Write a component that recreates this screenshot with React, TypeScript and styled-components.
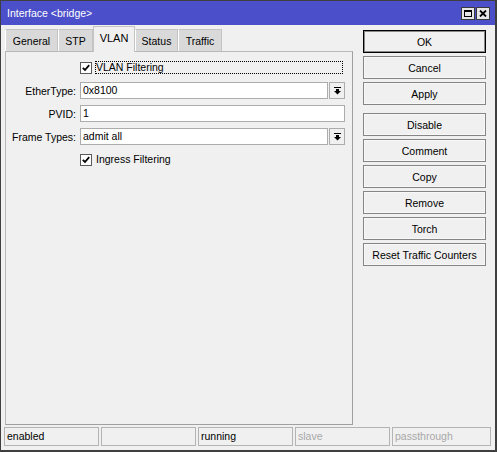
import styled, { createGlobalStyle } from "styled-components";

const GlobalStyle = createGlobalStyle`
  html, body {
    margin: 0;
    padding: 0;
    background: #f0f0f0;
  }
  * {
    box-sizing: border-box;
  }
`;

const Window = styled.div`
  width: 497px;
  height: 452px;
  display: flex;
  flex-direction: column;
  background: #f0f0f0;
  border: 1px solid #3f3f3f;
  border-bottom-width: 2px;
  border-right-width: 2px;
  font-family: "Liberation Sans", Arial, sans-serif;
  font-size: 10.5px;
  color: #000;
`;

const TitleBar = styled.div`
  height: 24px;
  display: flex;
  align-items: center;
  padding: 0 5px 0 6px;
  background: #4b4fc9;
  color: #fff;
  font-size: 10.5px;
`;

const TitleText = styled.span`
  flex: 1;
  padding-bottom: 1px;
`;

const TitleButton = styled.div`
  width: 14px;
  height: 13px;
  margin-left: 1px;
  display: flex;
  align-items: center;
  justify-content: center;
  background: #e6e6e6;
  border: 1px solid #3a3a3a;
`;

const Main = styled.div`
  display: grid;
  grid-template-columns: 348px 123px;
  column-gap: 10px;
  padding-left: 4px;
`;

const LeftColumn = styled.div`
  display: flex;
  flex-direction: column;
`;

const TabStrip = styled.div`
  height: 26px;
  display: flex;
  align-items: flex-end;
  padding-left: 0;
`;

const Tab = styled.div<{ $active?: boolean; $width: number }>`
  width: ${(p) => p.$width}px;
  height: ${(p) => (p.$active ? 26 : 22)}px;
  margin-bottom: ${(p) => (p.$active ? -1 : 0)}px;
  position: relative;
  z-index: ${(p) => (p.$active ? 1 : 0)};
  display: flex;
  align-items: center;
  justify-content: center;
  padding-bottom: ${(p) => (p.$active ? 3 : 0)}px;
  background: ${(p) => (p.$active ? "#f0f0f0" : "#d9d9d9")};
  border: 1px solid #c4c4c4;
  border-bottom: none;
  border-left-color: ${(p) => (p.$active ? "#c4c4c4" : "#ffffff")};
  font-size: ${(p) => (p.$active ? 11 : 10.5)}px;
`;

const Panel = styled.div`
  height: 374px;
  border: 1px solid #a0a0a0;
  border-top-color: #b8b8b8;
  border-left-color: #b8b8b8;
  display: flex;
  flex-direction: column;
  gap: 6px;
  padding: 7px 7px 0 0;
`;

const Row = styled.div`
  height: 17px;
  display: flex;
  align-items: center;
`;

const CheckRow = styled(Row)`
  padding-left: 74px;
`;

const Label = styled.label`
  width: 70px;
  margin-right: 4px;
  text-align: right;
  white-space: nowrap;
`;

const Input = styled.div`
  flex: 1;
  height: 17px;
  line-height: 15px;
  padding-left: 2px;
  background: #fff;
  border: 1px solid #acacac;
  white-space: nowrap;
`;

const DropButton = styled.div`
  width: 16px;
  height: 17px;
  margin-left: 1px;
  display: flex;
  align-items: center;
  justify-content: center;
  background: #f0f0f0;
  border: 1px solid #acacac;
`;

const CheckBox = styled.span`
  width: 12px;
  height: 12px;
  margin-right: 3px;
  display: flex;
  align-items: center;
  justify-content: center;
  background: #fff;
  border: 1px solid #5a5a5a;
  flex-shrink: 0;
`;

const CheckLabel = styled.span<{ $focused?: boolean }>`
  flex: ${(p) => (p.$focused ? 1 : "none")};
  height: 13px;
  line-height: 12px;
  padding-left: 1px;
  margin-right: 2px;
  outline: ${(p) => (p.$focused ? "1px dotted #000" : "none")};
  outline-offset: -1px;
`;

const ButtonColumn = styled.div`
  display: flex;
  flex-direction: column;
  gap: 3px;
  padding-top: 5px;
`;

const Button = styled.div<{ $default?: boolean; $groupStart?: boolean }>`
  height: 23px;
  margin-top: ${(p) => (p.$groupStart ? 5 : 0)}px;
  display: flex;
  align-items: center;
  justify-content: center;
  background: #f0f0f0;
  border: 1px solid ${(p) => (p.$default ? "#000" : "#858585")};
  box-shadow: ${(p) =>
    p.$default ? "inset 0 0 0 1px #8a8a8a" : "inset 0 0 0 1px #f8f8f8"};
  white-space: nowrap;
`;

const StatusBar = styled.div`
  display: grid;
  grid-template-columns: repeat(4, 95px) 1fr;
  gap: 2px;
  margin-top: 2px;
  padding: 0 4px 0 3px;
`;

const StatusCell = styled.div<{ $dim?: boolean }>`
  height: 19px;
  line-height: 17px;
  padding-left: 2px;
  border: 1px solid #b4b4b4;
  color: ${(p) => (p.$dim ? "#a8a8a8" : "#000")};
`;

const DropIcon = () => (
  <svg width="7" height="8" viewBox="0 0 7 8">
    <rect x="0" y="0" width="7" height="1" fill="#000" />
    <rect x="2" y="2" width="3" height="2" fill="#000" />
    <polygon points="0,4 7,4 3.5,7.5" fill="#000" />
  </svg>
);

const CheckIcon = () => (
  <svg width="8" height="8" viewBox="0 0 8 8">
    <path d="M0.8 3.8 L3 6 L7.2 1.2" fill="none" stroke="#000" strokeWidth="1.8" />
  </svg>
);

const tabs = [
  { name: "General", width: 53 },
  { name: "STP", width: 35 },
  { name: "VLAN", width: 42, active: true },
  { name: "Status", width: 43 },
  { name: "Traffic", width: 44 },
];

const actions = ["Disable", "Comment", "Copy", "Remove", "Torch", "Reset Traffic Counters"];

const statuses = [
  { text: "enabled" },
  { text: "" },
  { text: "running" },
  { text: "slave", dim: true },
  { text: "passthrough", dim: true },
];

export default function App() {
  return (
    <>
      <GlobalStyle />
      <Window>
        <TitleBar>
          <TitleText>Interface &lt;bridge&gt;</TitleText>
          <TitleButton>
            <svg width="8" height="7" viewBox="0 0 8 7">
              <rect x="0.5" y="0.5" width="7" height="6" fill="none" stroke="#000" />
              <rect x="0" y="0" width="8" height="2" fill="#000" />
            </svg>
          </TitleButton>
          <TitleButton>
            <svg width="8" height="7" viewBox="0 0 8 7">
              <path d="M1 0.5 L7 6.5 M7 0.5 L1 6.5" stroke="#000" strokeWidth="1.8" />
            </svg>
          </TitleButton>
        </TitleBar>

        <Main>
          <LeftColumn>
            <TabStrip>
              {tabs.map((t) => (
                <Tab key={t.name} $active={t.active} $width={t.width}>
                  {t.name}
                </Tab>
              ))}
            </TabStrip>
            <Panel>
              <CheckRow>
                <CheckBox>
                  <CheckIcon />
                </CheckBox>
                <CheckLabel $focused>VLAN Filtering</CheckLabel>
              </CheckRow>
              <Row>
                <Label>EtherType:</Label>
                <Input>0x8100</Input>
                <DropButton>
                  <DropIcon />
                </DropButton>
              </Row>
              <Row>
                <Label>PVID:</Label>
                <Input>1</Input>
              </Row>
              <Row>
                <Label>Frame Types:</Label>
                <Input>admit all</Input>
                <DropButton>
                  <DropIcon />
                </DropButton>
              </Row>
              <CheckRow>
                <CheckBox>
                  <CheckIcon />
                </CheckBox>
                <CheckLabel>Ingress Filtering</CheckLabel>
              </CheckRow>
            </Panel>
          </LeftColumn>

          <ButtonColumn>
            <Button $default>OK</Button>
            <Button>Cancel</Button>
            <Button>Apply</Button>
            {actions.map((a, i) => (
              <Button key={a} $groupStart={i === 0}>
                {a}
              </Button>
            ))}
          </ButtonColumn>
        </Main>

        <StatusBar>
          {statuses.map((s, i) => (
            <StatusCell key={i} $dim={s.dim}>
              {s.text}
            </StatusCell>
          ))}
        </StatusBar>
      </Window>
    </>
  );
}
